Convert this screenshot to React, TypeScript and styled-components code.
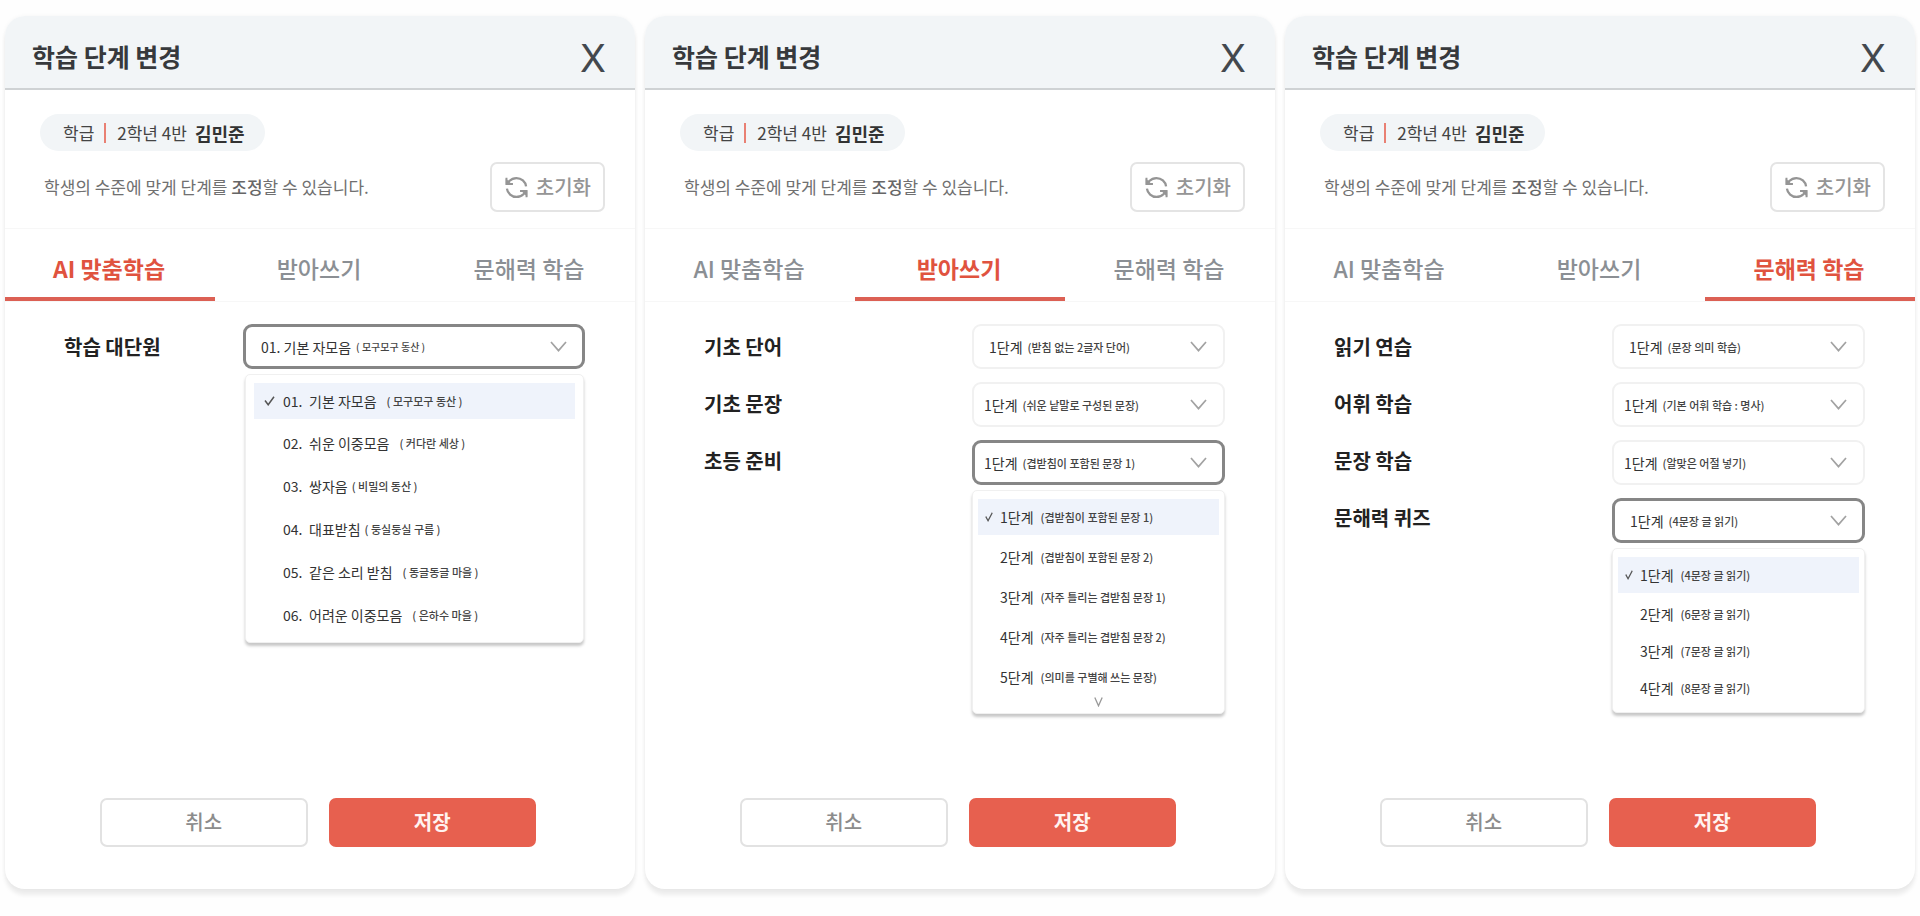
import React, { useId, useState } from 'react';
import styled, { createGlobalStyle, css } from 'styled-components';

const GlobalStyle = createGlobalStyle`
  *, *::before, *::after { box-sizing: border-box; }
  body {
    margin: 0;
    background: #fefefe;
    color: #2b2b2b;
    font-family: 'Noto Sans CJK KR', 'Noto Sans', sans-serif;
  }
  button, select { font-family: inherit; }
  h2, p, ul { margin: 0; padding: 0; }
`;

type Choice = { no?: string; name: string; note: string; tight?: boolean };
type Field = {
  label: string;
  choices: Choice[];
  narrow?: boolean;
  open?: boolean;
};
type PanelData = {
  fields: Field[];
  variant: 'unit' | 'step';
  rowHeight: number;
  labelInset: number;
  more?: boolean;
};

const TABS = ['AI 맞춤학습', '받아쓰기', '문해력 학습'];

const PANELS: PanelData[] = [
  {
    variant: 'unit',
    rowHeight: 43,
    labelInset: 59,
    fields: [
      {
        label: '학습 대단원',
        open: true,
        choices: [
          { no: '01.', name: '기본 자모음', note: '( 모구모구 동산 )' },
          { no: '02.', name: '쉬운 이중모음', note: '( 커다란 세상 )' },
          { no: '03.', name: '쌍자음', note: '( 비밀의 동산 )', tight: true },
          { no: '04.', name: '대표받침', note: '( 둥실둥실 구름 )', tight: true },
          { no: '05.', name: '같은 소리 받침', note: '( 동글동글 마을 )' },
          { no: '06.', name: '어려운 이중모음', note: '( 은하수 마을 )' },
        ],
      },
    ],
  },
  {
    variant: 'step',
    rowHeight: 40,
    labelInset: 59,
    more: true,
    fields: [
      { label: '기초 단어', choices: [{ name: '1단계', note: '(받침 없는 2글자 단어)' }] },
      { label: '기초 문장', narrow: true, choices: [{ name: '1단계', note: '(쉬운 낱말로 구성된 문장)' }] },
      {
        label: '초등 준비',
        narrow: true,
        open: true,
        choices: [
          { name: '1단계', note: '(겹받침이 포함된 문장 1)' },
          { name: '2단계', note: '(겹받침이 포함된 문장 2)' },
          { name: '3단계', note: '(자주 틀리는 겹받침 문장 1)' },
          { name: '4단계', note: '(자주 틀리는 겹받침 문장 2)' },
          { name: '5단계', note: '(의미를 구별해 쓰는 문장)' },
        ],
      },
    ],
  },
  {
    variant: 'step',
    rowHeight: 37,
    labelInset: 49,
    fields: [
      { label: '읽기 연습', choices: [{ name: '1단계', note: '(문장 의미 학습)' }] },
      { label: '어휘 학습', narrow: true, choices: [{ name: '1단계', note: '(기본 어휘 학습 : 명사)' }] },
      { label: '문장 학습', narrow: true, choices: [{ name: '1단계', note: '(알맞은 어절 넣기)' }] },
      {
        label: '문해력 퀴즈',
        open: true,
        choices: [
          { name: '1단계', note: '(4문장 글 읽기)' },
          { name: '2단계', note: '(6문장 글 읽기)' },
          { name: '3단계', note: '(7문장 글 읽기)' },
          { name: '4단계', note: '(8문장 글 읽기)' },
        ],
      },
    ],
  },
];

const Page = styled.main`
  display: grid;
  grid-template-columns: repeat(3, minmax(0, 1fr));
  gap: 10px;
  min-height: 100vh;
  padding: 16px 5px 27px;
`;

const Panel = styled.section`
  display: flex;
  flex-direction: column;
  background: #fff;
  border-radius: 20px;
  box-shadow: 0 6px 4px rgba(0, 0, 0, 0.07), 0 0 4px rgba(0, 0, 0, 0.04);
`;

const Header = styled.header`
  display: flex;
  align-items: center;
  justify-content: space-between;
  height: 74px;
  padding: 8px 29px 0 27px;
  background: #f2f5f7;
  border-bottom: 2px solid #cfd2d4;
  border-radius: 20px 20px 0 0;
`;

const Title = styled.h2`
  font-size: 25px;
  line-height: 36px;
  font-weight: 700;
  color: #37393c;
`;

const CloseButton = styled.button`
  padding: 4px 0 0;
  border: 0;
  background: none;
  font-family: Inter, 'Liberation Sans', sans-serif;
  font-size: 38px;
  line-height: 40px;
  font-weight: 400;
  color: #43484e;
  cursor: pointer;
`;

const Info = styled.div`
  display: flex;
  flex-direction: column;
  align-items: flex-start;
  gap: 11px;
  padding: 24px 30px 16px 35px;
  border-bottom: 1px solid #f7f7f7;
`;

const StudentTag = styled.p`
  display: flex;
  align-items: center;
  height: 37px;
  padding: 0 20px 0 23px;
  border-radius: 19px;
  background: #f2f5f7;
  font-size: 17px;
  line-height: 24px;
  color: #444;
`;

const TagBar = styled.span`
  width: 2px;
  height: 20px;
  margin: 0 11px 0 10px;
  background: #e98073;
`;

const StudentName = styled.strong`
  margin-left: 8px;
  font-size: 18px;
  font-weight: 700;
  color: #333;
`;

const InfoRow = styled.div`
  display: flex;
  align-items: center;
  justify-content: space-between;
  width: 100%;
`;

const Guide = styled.p`
  padding-left: 4px;
  font-size: 17px;
  line-height: 24px;
  color: #707070;

  em {
    font-style: normal;
    font-weight: 500;
    color: #666;
  }
`;

const ResetButton = styled.button`
  display: flex;
  align-items: center;
  gap: 7px;
  height: 50px;
  padding: 0 12px;
  border: 2px solid #e4e4e4;
  border-radius: 7px;
  background: #fff;
  font-size: 20px;
  line-height: 28px;
  font-weight: 500;
  color: #959595;
  cursor: pointer;
`;

const TabList = styled.div`
  display: grid;
  grid-template-columns: repeat(3, minmax(0, 1fr));
  border-bottom: 1px solid #f7f7f7;
`;

const Tab = styled.button<{ $active: boolean }>`
  height: 72px;
  padding: 10px 2px 0 0;
  border: 0;
  border-bottom: 4px solid ${(p) => (p.$active ? '#dc6054' : 'transparent')};
  background: none;
  font-size: 23px;
  line-height: 32px;
  font-weight: ${(p) => (p.$active ? 700 : 500)};
  color: ${(p) => (p.$active ? '#e0533f' : '#8b8f94')};
  cursor: pointer;
`;

const Form = styled.div<{ $inset: number }>`
  display: flex;
  justify-content: space-between;
  padding: 22px 50px 40px ${(p) => p.$inset}px;
`;

const LabelColumn = styled.div`
  display: flex;
  flex-direction: column;
  gap: 12px;
`;

const FieldLabel = styled.label`
  font-size: 20px;
  line-height: 45px;
  font-weight: 700;
  color: #222;
`;

const SelectColumn = styled.div<{ $wide: boolean }>`
  display: flex;
  flex-direction: column;
  gap: 13px;
  width: ${(p) => (p.$wide ? 342 : 253)}px;
`;

const SelectBox = styled.div<{ $open: boolean; $narrow: boolean }>`
  position: relative;
  display: flex;
  align-items: center;
  height: 45px;
  padding: 0 16px 0 ${(p) => (p.$narrow ? 10 : 15)}px;
  border: 2px solid #f1f1f1;
  border-radius: 9px;
  background: #fff;
  ${(p) =>
    p.$open &&
    css`
      padding: 0 15px 0 ${p.$narrow ? 9 : 15}px;
      border: 3px solid #868686;
    `}

  > svg {
    margin-left: auto;
  }
`;

const NativeSelect = styled.select`
  position: absolute;
  inset: 0;
  width: 100%;
  height: 100%;
  opacity: 0;
  cursor: pointer;
`;

const Main = styled.span`
  font-size: 14px;
  line-height: 20px;
  color: #333;
`;

const Note = styled.span<{ $gap: number; $small?: boolean }>`
  margin-left: ${(p) => p.$gap}px;
  font-size: ${(p) => (p.$small ? 10 : 11)}px;
  line-height: 20px;
  font-weight: 500;
  color: #444;
`;

const Menu = styled.ul<{ $wide: boolean }>`
  position: absolute;
  z-index: 1;
  top: 47px;
  left: ${(p) => (p.$wide ? -1 : -3)}px;
  right: ${(p) => (p.$wide ? -2 : -3)}px;
  padding: 8px ${(p) => (p.$wide ? 8 : 5)}px 6px;
  border: 1px solid #f0f0f0;
  border-radius: 5px;
  background: #fff;
  box-shadow: 0 3px 3px rgba(0, 0, 0, 0.22);
  list-style: none;
`;

const Option = styled.li<{ $selected: boolean; $height: number; $wide: boolean }>`
  display: flex;
  align-items: center;
  height: ${(p) => p.$height}px;
  padding-left: ${(p) => (p.$wide ? 10 : 7)}px;
  cursor: pointer;
  ${(p) =>
    p.$selected &&
    css`
      height: 36px;
      margin-bottom: 2px;
      background: #eff3fb;
    `}
`;

const CheckSlot = styled.span<{ $wide: boolean }>`
  display: flex;
  width: ${(p) => (p.$wide ? 19 : 15)}px;
`;

const OptionNo = styled(Main)`
  width: 26px;
`;

const MoreMark = styled.li`
  display: flex;
  justify-content: center;
`;

const Footer = styled.footer`
  display: flex;
  gap: 21px;
  margin-top: auto;
  padding: 0 99px 42px 95px;
`;

const FooterButton = styled.button<{ $primary?: boolean }>`
  flex: 1;
  height: 49px;
  padding: 0 0 2px;
  border: 2px solid ${(p) => (p.$primary ? '#e7604f' : '#e2e2e2')};
  border-radius: 7px;
  background: ${(p) => (p.$primary ? '#e7604f' : '#fff')};
  font-size: 20px;
  line-height: 28px;
  font-weight: ${(p) => (p.$primary ? 700 : 500)};
  color: ${(p) => (p.$primary ? '#fff3f0' : '#8c8c8c')};
  cursor: pointer;
`;

const RefreshIcon = () => (
  <svg width="25" height="25" viewBox="0 0 24 24" fill="none" stroke="#959595" strokeWidth="2.2" aria-hidden="true">
    <path d="M21.2 11A9.4 9.4 0 0 0 12 2.9a9.6 9.6 0 0 0-6.9 2.9L4 7" />
    <path d="M2.8 13A9.4 9.4 0 0 0 12 21.1a9.6 9.6 0 0 0 6.9-2.9L20 17" />
    <path d="M1.6 3v6.4H8z" fill="#959595" stroke="none" />
    <path d="M22.4 21v-6.4H16z" fill="#959595" stroke="none" />
    <path d="M2.4 2.6v6H8.6M21.6 21.4v-6H15.4" strokeWidth="1.8" />
  </svg>
);

const ChevronIcon = () => (
  <svg width="17" height="11" viewBox="0 0 17 11" fill="none" stroke="#a2a2a2" strokeWidth="1.7" aria-hidden="true">
    <path d="M1 1l7.5 8.6L16 1" />
  </svg>
);

const CheckIcon = ({ small }: { small: boolean }) => (
  <svg
    width={small ? 8 : 11}
    height="10"
    viewBox="0 0 11 10"
    preserveAspectRatio="none"
    fill="none"
    stroke="#555"
    strokeWidth="1.5"
    aria-hidden="true"
  >
    <path d="M1 4.5l3.2 4.3L10 .8" />
  </svg>
);

const MoreIcon = () => (
  <svg width="9" height="10" viewBox="0 0 9 10" fill="none" stroke="#999" strokeWidth="1.3" aria-hidden="true">
    <path d="M.8 .6l3.7 8.2L8.2 .6" />
  </svg>
);

type DropdownProps = { id: string; field: Field; panel: PanelData };

function Dropdown({ id, field, panel }: DropdownProps) {
  const [open, setOpen] = useState(Boolean(field.open));
  const [index, setIndex] = useState(0);
  const wide = panel.variant === 'unit';
  const current = field.choices[index];

  const toggle = (e: React.MouseEvent) => {
    e.preventDefault();
    setOpen(!open);
  };

  return (
    <SelectBox $open={open} $narrow={Boolean(field.narrow)}>
      <Main>{current.no ? `${current.no} ${current.name}` : current.name}</Main>
      <Note $gap={5} $small={wide}>
        {current.note}
      </Note>
      <ChevronIcon />
      <NativeSelect id={id} value={index} onMouseDown={toggle} onChange={(e) => setIndex(Number(e.target.value))}>
        {field.choices.map((c, i) => (
          <option key={c.note} value={i} label={`${c.name} ${c.note}`} />
        ))}
      </NativeSelect>
      {open && (
        <Menu role="listbox" aria-label={field.label} $wide={wide}>
          {field.choices.map((c, i) => (
            <Option
              key={c.note}
              role="option"
              aria-selected={i === index}
              $selected={i === index}
              $height={panel.rowHeight}
              $wide={wide}
              onClick={() => setIndex(i)}
            >
              <CheckSlot $wide={wide}>{i === index && <CheckIcon small={!wide} />}</CheckSlot>
              {c.no && <OptionNo>{c.no}</OptionNo>}
              <Main>{c.name}</Main>
              <Note $gap={c.tight ? 4 : wide ? 10 : 7}>{c.note}</Note>
            </Option>
          ))}
          {panel.more && (
            <MoreMark role="presentation">
              <MoreIcon />
            </MoreMark>
          )}
        </Menu>
      )}
    </SelectBox>
  );
}

function StagePanel({ panel, initialTab }: { panel: PanelData; initialTab: number }) {
  const uid = useId();
  const [tab, setTab] = useState(initialTab);
  return (
    <Panel>
      <Header>
        <Title>학습 단계 변경</Title>
        <CloseButton type="button" aria-label="닫기">
          X
        </CloseButton>
      </Header>
      <Info>
        <StudentTag>
          학급
          <TagBar />
          2학년 4반
          <StudentName>김민준</StudentName>
        </StudentTag>
        <InfoRow>
          <Guide>
            학생의 수준에 맞게 단계를 <em>조정</em>할 수 있습니다.
          </Guide>
          <ResetButton type="button">
            <RefreshIcon />
            초기화
          </ResetButton>
        </InfoRow>
      </Info>
      <TabList role="tablist">
        {TABS.map((name, i) => (
          <Tab key={name} type="button" role="tab" aria-selected={i === tab} $active={i === tab} onClick={() => setTab(i)}>
            {name}
          </Tab>
        ))}
      </TabList>
      <Form $inset={panel.labelInset}>
        <LabelColumn>
          {panel.fields.map((f, i) => (
            <FieldLabel key={f.label} htmlFor={`${uid}-${i}`}>
              {f.label}
            </FieldLabel>
          ))}
        </LabelColumn>
        <SelectColumn $wide={panel.variant === 'unit'}>
          {panel.fields.map((f, i) => (
            <Dropdown key={f.label} id={`${uid}-${i}`} field={f} panel={panel} />
          ))}
        </SelectColumn>
      </Form>
      <Footer>
        <FooterButton type="button">취소</FooterButton>
        <FooterButton type="button" $primary>
          저장
        </FooterButton>
      </Footer>
    </Panel>
  );
}

export default function App() {
  return (
    <>
      <GlobalStyle />
      <Page>
        {PANELS.map((panel, i) => (
          <StagePanel key={TABS[i]} panel={panel} initialTab={i} />
        ))}
      </Page>
    </>
  );
}
